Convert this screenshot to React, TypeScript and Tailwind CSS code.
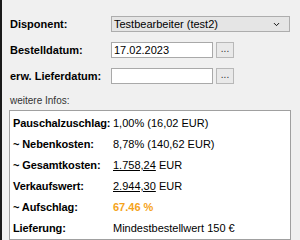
import { ChevronDown } from 'lucide-react';

const rows = [
  { label: 'Pauschalzuschlag:', value: <span>1,00% (16,02 EUR)</span> },
  { label: '~ Nebenkosten:', value: <span>8,78% (140,62 EUR)</span> },
  { label: '~ Gesamtkosten:', value: <span><span className="underline">1.758,24</span> EUR</span> },
  { label: 'Verkaufswert:', value: <span><span className="underline">2.944,30</span> EUR</span> },
  { label: '~ Aufschlag:', value: <span className="font-bold text-[#f5a31a]">67.46 %</span> },
  { label: 'Lieferung:', value: <span>Mindestbestellwert 150 €</span> },
];

function DateField({ value }: { value: string }) {
  return (
    <div className="flex items-center gap-[3px]">
      <div className="h-[16px] w-[102px] border border-[#a9a9a9] bg-white px-[2px] leading-[14px]">{value}</div>
      <button
        type="button"
        className="flex h-[16px] w-[18px] items-center justify-center border border-[#b8b8b8] bg-[#e9e9e9] pb-[3px] text-[10px] leading-none text-[#333]"
      >
        ...
      </button>
    </div>
  );
}

export default function App() {
  return (
    <div
      className="flex h-[240px] w-[300px] flex-col overflow-hidden border-l-2 border-[#1a1a1a] bg-[#f0f0f0] text-[11px] text-black"
      style={{ fontFamily: '"Liberation Sans", Arial, sans-serif' }}
    >
      <div className="flex flex-col gap-[10px] pl-[8px] pt-[16px]">
        <div className="flex h-[16px] items-center">
          <span className="w-[101px] font-bold">Disponent:</span>
          <div className="flex h-[16px] w-[179px] items-center justify-between border border-[#adadad] bg-[#e5e5e5] pl-[2px] pr-[8px]">
            <span>Testbearbeiter (test2)</span>
            <ChevronDown size={9} strokeWidth={2.5} />
          </div>
        </div>
        <div className="flex h-[16px] items-center">
          <span className="w-[101px] font-bold">Bestelldatum:</span>
          <DateField value="17.02.2023" />
        </div>
        <div className="flex h-[16px] items-center">
          <span className="w-[101px] font-bold">erw. Lieferdatum:</span>
          <DateField value="" />
        </div>
      </div>
      <div className="pl-[8px] pt-[11px] text-[10px] leading-[12px] text-[#333]">weitere Infos:</div>
      <div className="ml-[7px] mt-[3px] w-[282px] flex-1 border border-[#a0a0a0] bg-white pl-[3px] pt-[5px]">
        <div className="flex flex-col gap-[7px]">
          {rows.map((r) => (
            <div key={r.label} className="flex h-[14px] items-center">
              <span className="w-[100px] shrink-0 font-bold tracking-[-0.1px]">{r.label}</span>
              <span>{r.value}</span>
            </div>
          ))}
        </div>
      </div>
    </div>
  );
}
